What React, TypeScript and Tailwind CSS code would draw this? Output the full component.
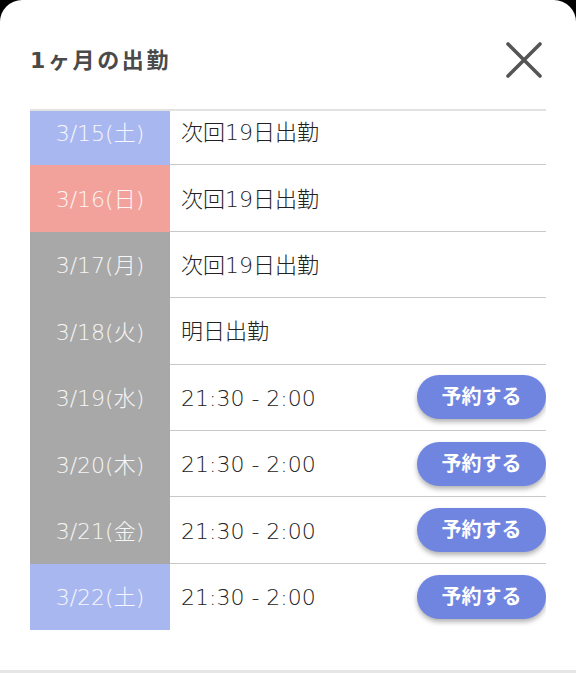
import React from 'react';

type Day = {
  date: string;
  kind: 'sat' | 'sun' | 'weekday';
  text: string;
  bookable?: boolean;
};

const days: Day[] = [
  { date: '3/15(土)', kind: 'sat', text: '次回19日出勤' },
  { date: '3/16(日)', kind: 'sun', text: '次回19日出勤' },
  { date: '3/17(月)', kind: 'weekday', text: '次回19日出勤' },
  { date: '3/18(火)', kind: 'weekday', text: '明日出勤' },
  { date: '3/19(水)', kind: 'weekday', text: '21:30 - 2:00', bookable: true },
  { date: '3/20(木)', kind: 'weekday', text: '21:30 - 2:00', bookable: true },
  { date: '3/21(金)', kind: 'weekday', text: '21:30 - 2:00', bookable: true },
  { date: '3/22(土)', kind: 'sat', text: '21:30 - 2:00', bookable: true },
];

const cellColor = {
  sat: 'bg-[#a9b7f0]',
  sun: 'bg-[#f2a19b]',
  weekday: 'bg-[#a8a8a8]',
};

const CloseIcon = () => (
  <svg width="38" height="38" viewBox="0 0 38 38" fill="none">
    <path d="M3 3L35 35M35 3L3 35" stroke="#555555" strokeWidth="3.6" strokeLinecap="round" />
  </svg>
);

const DayRow: React.FC<{ day: Day; last: boolean }> = ({ day, last }) => (
  <div className="flex h-[66.4px]">
    <div
      className={`w-[140px] shrink-0 flex items-center justify-center pt-[2px] text-[22px] font-light text-white/90 ${cellColor[day.kind]}`}
    >
      {day.date}
    </div>
    <div
      className={`flex-1 flex items-center justify-between pl-[11px] ${
        last ? '' : 'border-b border-[#c8c8c8]'
      }`}
    >
      <span className="pt-[2px] text-[22px] font-light text-[#222222]">{day.text}</span>
      {day.bookable && (
        <button className="w-[129px] h-[44px] rounded-full bg-[#7085e0] text-white text-[20px] font-bold shadow-[0_3px_5px_rgba(0,0,0,0.3)]">
          予約する
        </button>
      )}
    </div>
  </div>
);

export default function App() {
  return (
    <div
      className="h-[673px] bg-black overflow-hidden"
      style={{ fontFamily: '"DejaVu Sans", "Noto Sans CJK JP", sans-serif' }}
    >
      <div className="h-full bg-white rounded-t-[22px] flex flex-col">
        <div className="h-[109px] shrink-0 flex items-center justify-between pl-[30px] pr-[33px] pt-[11px]">
          <h2 className="text-[22px] font-bold tracking-[0.12em] text-[#4a4a4a]">1ヶ月の出勤</h2>
          <CloseIcon />
        </div>
        <div className="mx-[30px] border-t-2 border-[#e2e2e2] overflow-hidden shrink-0">
          <div className="-mt-[12px]">
            {days.map((d, i) => (
              <DayRow key={d.date} day={d} last={i === days.length - 1} />
            ))}
          </div>
        </div>
        <div className="flex-1" />
        <div className="h-[3px] shrink-0 bg-[#e6e6e6]" />
      </div>
    </div>
  );
}
